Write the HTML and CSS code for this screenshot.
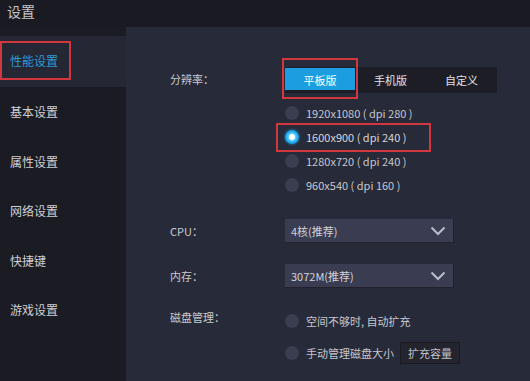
FILE: index.html
```html
<!DOCTYPE html>
<html lang="zh-CN">
<head>
    <meta charset="UTF-8">
    <title>设置</title>
    <link rel="stylesheet" href="styles.css">
</head>
<body>
    <div class="title-bar">设置</div>
    <div class="window">
        <ul class="side-nav">
            <li class="nav-item active"><span class="mark">性能设置</span></li>
            <li class="nav-item">基本设置</li>
            <li class="nav-item">属性设置</li>
            <li class="nav-item">网络设置</li>
            <li class="nav-item">快捷键</li>
            <li class="nav-item">游戏设置</li>
        </ul>
        <div class="panel">
            <div class="row row-res">
                <div class="label">分辨率：</div>
                <div class="control">
                    <div class="segment">
                        <div class="seg-btn on">平板版</div>
                        <div class="seg-btn">手机版</div>
                        <div class="seg-btn">自定义</div>
                    </div>
                    <ul class="radio-list">
                        <li class="radio-row"><i class="radio"></i>1920x1080 ( dpi 280 )</li>
                        <li class="radio-row picked"><i class="radio checked"></i>1600x900 ( dpi 240 )</li>
                        <li class="radio-row"><i class="radio"></i>1280x720 ( dpi 240 )</li>
                        <li class="radio-row"><i class="radio"></i>960x540 ( dpi 160 )</li>
                    </ul>
                </div>
            </div>
            <div class="row row-cpu">
                <div class="label">CPU：</div>
                <div class="select">
                    <span>4核(推荐)</span>
                    <svg width="16" height="10" viewBox="0 0 16 10"><path d="M1.5 1.5 L8 8 L14.5 1.5" fill="none" stroke="#b9bccb" stroke-width="2"/></svg>
                </div>
            </div>
            <div class="row row-mem">
                <div class="label">内存：</div>
                <div class="select">
                    <span>3072M(推荐)</span>
                    <svg width="16" height="10" viewBox="0 0 16 10"><path d="M1.5 1.5 L8 8 L14.5 1.5" fill="none" stroke="#b9bccb" stroke-width="2"/></svg>
                </div>
            </div>
            <div class="row row-disk">
                <div class="label">磁盘管理：</div>
                <div class="control">
                    <div class="radio-row"><i class="radio"></i>空间不够时, 自动扩充</div>
                    <div class="radio-row second"><i class="radio"></i>手动管理磁盘大小<span class="small-btn">扩充容量</span></div>
                </div>
            </div>
        </div>
    </div>
</body>
</html>
```

FILE: styles.css
```css
* {
    box-sizing: border-box;
}

body {
    margin: 0;
    width: 530px;
    height: 381px;
    overflow: hidden;
    background: #1a1b22;
    font-family: "Noto Sans CJK SC", "Liberation Sans", sans-serif;
    font-size: 12px;
    color: #c9cad2;
}

ul {
    margin: 0;
    padding: 0;
    list-style: none;
}

.title-bar {
    height: 27px;
    line-height: 22px;
    padding-left: 7px;
    font-size: 14px;
    color: #c4c5cc;
}

.window {
    display: flex;
    height: 354px;
}

/* 左侧菜单 */
.side-nav {
    width: 126px;
    padding-top: 9px;
    background: #1b1c23;
}

.nav-item {
    height: 49.5px;
    line-height: 49.5px;
    padding-left: 10px;
    color: #cfd0d6;
}

.nav-item.active {
    height: 51px;
    padding-left: 0;
    display: flex;
    align-items: center;
    background: #252734;
    color: #2c9ad4;
}

.mark {
    height: 39px;
    line-height: 35px;
    padding: 0 11px 0 8px;
    margin-top: -3px;
    border: 2px solid #d2373d;
}

/* 右侧内容 */
.panel {
    flex: 1;
    padding: 40px 0 0 44px;
    background: #272a38;
    font-size: 11px;
}

.row {
    display: flex;
}

.label {
    width: 115px;
    flex-shrink: 0;
}

.row-res .label {
    line-height: 24px;
}

.segment {
    display: flex;
    width: 212px;
    height: 26px;
    background: #1c1d25;
}

.seg-btn {
    width: 71px;
    line-height: 26px;
    text-align: center;
    color: #e1e2e6;
}

.seg-btn.on {
    position: relative;
    width: 70px;
    background: #1b9de0;
    color: #fff;
    box-shadow: inset 0 -3px 0 #1c1d25, inset 0 1px 0 #1c1d25;
}

.seg-btn.on::after {
    content: "";
    position: absolute;
    left: -3px;
    right: -3px;
    top: -9px;
    bottom: -6px;
    border: 2px solid #d2373d;
}

.radio-list {
    margin-top: 8px;
}

.radio-row {
    position: relative;
    display: flex;
    align-items: center;
    height: 24px;
    color: #c6c7cf;
}

.radio-row.picked {
    color: #d6d7de;
}

.radio-row.picked::after {
    content: "";
    position: absolute;
    left: -9px;
    top: -2px;
    width: 151px;
    bottom: -3px;
    border: 2px solid #d2373d;
}

.radio {
    width: 14px;
    height: 14px;
    margin-right: 7px;
    border-radius: 50%;
    background: #3b3e51;
    flex-shrink: 0;
}

.radio.checked {
    background: radial-gradient(circle, #ffffff 0 2.5px, #5fd0ff 3.5px, #1aa3e8 6px);
    box-shadow: 0 0 3px #1a8fd0;
}

.select {
    display: flex;
    align-items: center;
    justify-content: space-between;
    width: 169px;
    height: 24px;
    padding: 0 7px 0 6px;
    background: #3a3d51;
    border-right: 1px solid #20212a;
    border-bottom: 1px solid #20212a;
    color: #d2d3da;
}

.row-cpu,
.row-mem {
    align-items: center;
}

.row-cpu {
    margin-top: 22px;
}

.row-mem {
    margin-top: 21px;
}

.row-disk {
    margin-top: 21px;
}

.row-disk .label {
    line-height: 16px;
}

.radio-row.second {
    margin-top: 8px;
}

.small-btn {
    display: inline-block;
    height: 22px;
    line-height: 20px;
    margin-left: 6px;
    padding: 0 7px;
    background: #23242d;
    border: 1px solid #1a1b21;
    color: #c0c1c8;
}
```
